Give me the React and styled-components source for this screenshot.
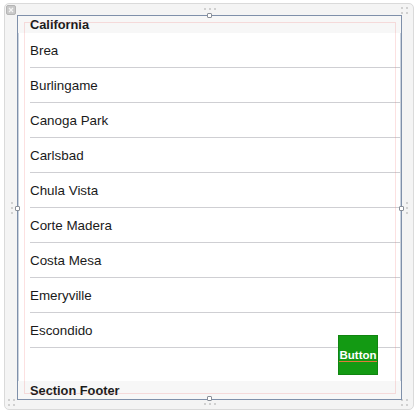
import React from "react";
import styled, { createGlobalStyle, css } from "styled-components";

const Global = createGlobalStyle`
  html, body { margin: 0; padding: 0; background: #ffffff; }
  body { font-family: "Liberation Sans", Arial, sans-serif; }
`;

const Page = styled.div`
  width: 418px;
  height: 412px;
  box-sizing: border-box;
  padding: 3px 4px 2px 4px;
  background: #ffffff;
`;

const Frame = styled.div`
  position: relative;
  box-sizing: border-box;
  width: 410px;
  height: 407px;
  border: 1px solid #dadada;
  border-radius: 5px;
  background: #f4f4f4;
  padding: 11px 11px 10px 12px;
`;

const View = styled.div`
  position: relative;
  box-sizing: border-box;
  height: 385px;
  border: 1px solid #7f90aa;
  box-shadow: inset 0 0 0 1px #c9d2de;
  background: #ffffff;
  overflow: hidden;
  display: flex;
  flex-direction: column;
`;

const Guides = styled.div`
  position: absolute;
  inset: 6px 5px 5px 6px;
  border: 1px solid rgba(240, 120, 120, 0.22);
  pointer-events: none;
`;

const SectionBand = styled.div`
  flex: 0 0 ${(p) => p.$h}px;
  box-sizing: border-box;
  background: #f7f7f7;
  padding-left: 12px;
  padding-top: ${(p) => p.$pt}px;
  font-weight: bold;
  font-size: 12.8px;
  color: #1b1b1b;
  line-height: 15px;
`;

const Row = styled.div`
  flex: 0 0 35px;
  box-sizing: border-box;
  display: flex;
  align-items: center;
  margin-left: 12px;
  border-bottom: 1px solid #cfcfd3;
  font-size: 13.4px;
  color: #1a1a1a;
`;

const Spacer = styled.div`
  flex: 1 1 auto;
`;

const GreenButton = styled.div`
  position: absolute;
  left: 320px;
  top: 319px;
  width: 40px;
  height: 40px;
  background: #139a13;
  color: #ffffff;
  font-weight: bold;
  font-size: 11.5px;
  display: flex;
  align-items: center;
  justify-content: center;
  box-shadow: inset 0 0 0 1px #108510;
`;

const ButtonLabel = styled.span`
  border-bottom: 1px solid #e0793a;
  line-height: 12px;
`;

const handlePos = {
  top: css`left: 202px; top: 9px;`,
  bottom: css`left: 202px; top: 392px;`,
  left: css`left: 10px; top: 202px;`,
  right: css`left: 394px; top: 202px;`,
};

const Handle = styled.div`
  position: absolute;
  ${(p) => handlePos[p.$side]}
  width: 5px;
  height: 5px;
  box-sizing: border-box;
  background: #ffffff;
  border: 1px solid #8a8f98;
  border-radius: 1px;
`;

const dotsPos = {
  top: css`left: 199px; top: 4px;`,
  bottom: css`left: 199px; top: 399px;`,
  left: css`left: 6px; top: 198px; flex-direction: column;`,
  right: css`left: 401px; top: 198px; flex-direction: column;`,
};

const Dots = styled.div`
  position: absolute;
  display: flex;
  gap: 3px;
  ${(p) => dotsPos[p.$side]}
`;

const Dot = styled.span`
  width: 2px;
  height: 2px;
  border-radius: 1px;
  background: #c4c4c4;
`;

const cornerPos = {
  tr: css`left: 396px; top: 3px;`,
  bl: css`left: 3px; top: 395px;`,
  br: css`left: 396px; top: 395px;`,
};

const CornerDots = styled.div`
  position: absolute;
  display: grid;
  grid-template-columns: 2px 2px;
  gap: 3px;
  ${(p) => cornerPos[p.$corner]}
`;

const CloseBox = styled.div`
  position: absolute;
  left: 1px;
  top: 1px;
  width: 10px;
  height: 10px;
  box-sizing: border-box;
  border-radius: 2px;
  background: #c9c9c9;
  border: 1px solid #b5b5b5;
  display: flex;
  align-items: center;
  justify-content: center;
`;

const cities = [
  "Brea",
  "Burlingame",
  "Canoga Park",
  "Carlsbad",
  "Chula Vista",
  "Corte Madera",
  "Costa Mesa",
  "Emeryville",
  "Escondido",
];

const DotRow = ({ side }) => (
  <Dots $side={side}>
    <Dot />
    <Dot />
    <Dot />
  </Dots>
);

const Corner = ({ corner }) => (
  <CornerDots $corner={corner}>
    <Dot />
    <Dot />
    <Dot />
    <Dot />
  </CornerDots>
);

export default function App() {
  return (
    <>
      <Global />
      <Page>
        <Frame>
          <CloseBox>
            <svg width="6" height="6" viewBox="0 0 6 6">
              <path d="M1 1L5 5M5 1L1 5" stroke="#f4f4f4" strokeWidth="1.3" />
            </svg>
          </CloseBox>
          {["top", "bottom", "left", "right"].map((s) => (
            <DotRow key={s} side={s} />
          ))}
          {["tr", "bl", "br"].map((c) => (
            <Corner key={c} corner={c} />
          ))}
          <View>
            <Guides />
            <SectionBand $h={17} $pt={1}>California</SectionBand>
            {cities.map((c) => (
              <Row key={c}>{c}</Row>
            ))}
            <Spacer />
            <SectionBand $h={18} $pt={2}>Section Footer</SectionBand>
            <GreenButton>
              <ButtonLabel>Button</ButtonLabel>
            </GreenButton>
          </View>
          {["top", "bottom", "left", "right"].map((s) => (
            <Handle key={s} $side={s} />
          ))}
        </Frame>
      </Page>
    </>
  );
}
